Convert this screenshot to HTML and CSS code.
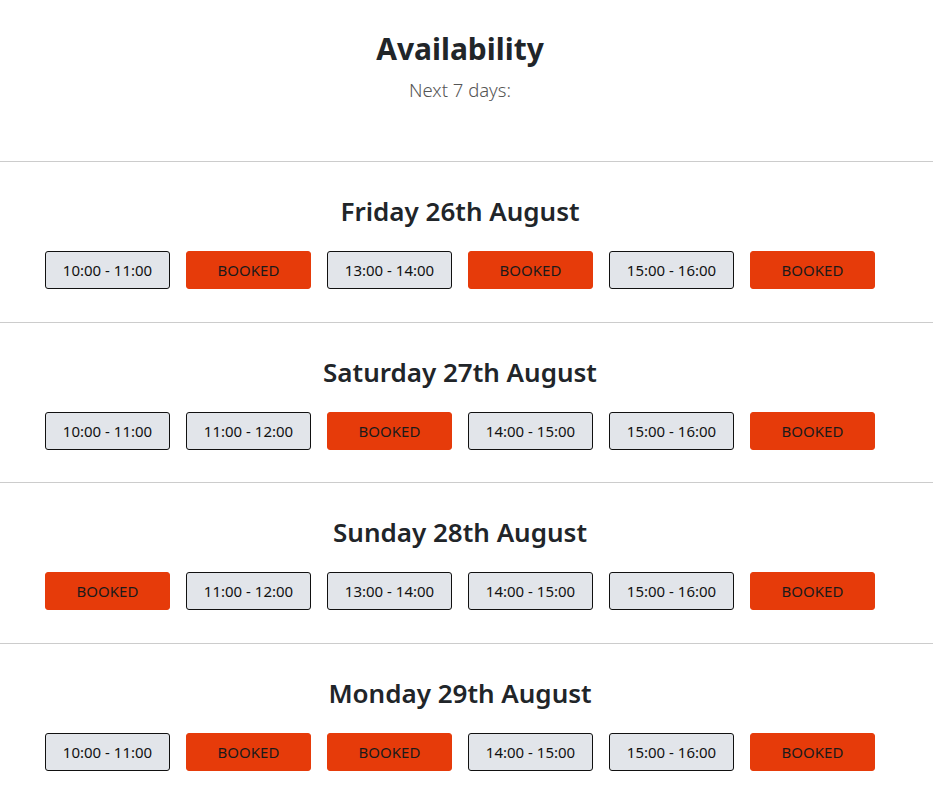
FILE: index.html
```html
<!DOCTYPE html>
<html lang="en">
<head>
<meta charset="utf-8">
<title>Availability</title>
<link rel="stylesheet" href="styles.css">
</head>
<body>
<header class="header">
  <h1 class="title">Availability</h1>
  <p class="subtitle">Next 7 days:</p>
</header>
<main>
  <section class="day">
    <h2 class="day-title">Friday 26th August</h2>
    <div class="slots">
      <button class="slot">10:00 - 11:00</button>
      <button class="slot booked">BOOKED</button>
      <button class="slot">13:00 - 14:00</button>
      <button class="slot booked">BOOKED</button>
      <button class="slot">15:00 - 16:00</button>
      <button class="slot booked">BOOKED</button>
    </div>
  </section>
  <section class="day">
    <h2 class="day-title">Saturday 27th August</h2>
    <div class="slots">
      <button class="slot">10:00 - 11:00</button>
      <button class="slot">11:00 - 12:00</button>
      <button class="slot booked">BOOKED</button>
      <button class="slot">14:00 - 15:00</button>
      <button class="slot">15:00 - 16:00</button>
      <button class="slot booked">BOOKED</button>
    </div>
  </section>
  <section class="day">
    <h2 class="day-title">Sunday 28th August</h2>
    <div class="slots">
      <button class="slot booked">BOOKED</button>
      <button class="slot">11:00 - 12:00</button>
      <button class="slot">13:00 - 14:00</button>
      <button class="slot">14:00 - 15:00</button>
      <button class="slot">15:00 - 16:00</button>
      <button class="slot booked">BOOKED</button>
    </div>
  </section>
  <section class="day">
    <h2 class="day-title">Monday 29th August</h2>
    <div class="slots">
      <button class="slot">10:00 - 11:00</button>
      <button class="slot booked">BOOKED</button>
      <button class="slot booked">BOOKED</button>
      <button class="slot">14:00 - 15:00</button>
      <button class="slot">15:00 - 16:00</button>
      <button class="slot booked">BOOKED</button>
    </div>
  </section>
</main>
</body>
</html>
```

FILE: styles.css
```css
html, body {
  margin: 0;
  padding: 0;
  background: #fff;
  color: #212529;
  font-family: "Noto Sans", "Open Sans", sans-serif;
}
body {
  overflow: hidden;
}
.header {
  width: 920px;
  text-align: center;
  padding-top: 29px;
  height: 161px;
  box-sizing: border-box;
}
.title {
  margin: 0;
  font-size: 30px;
  line-height: 40px;
  font-weight: 700;
  color: #212529;
}
.subtitle {
  margin: 9px 0 0;
  font-size: 18.5px;
  line-height: 24px;
  font-weight: 300;
  color: #555;
}
.day {
  border-top: 1px solid #ccc;
  height: 160.67px;
  box-sizing: border-box;
}
.day-title {
  width: 920px;
  margin: 0;
  padding-top: 32px;
  text-align: center;
  font-size: 26px;
  line-height: 34px;
  font-weight: 600;
  color: #212529;
}
.slots {
  width: 920px;
  display: flex;
  justify-content: center;
  gap: 16px;
  margin-top: 23px;
}
.slot {
  width: 125px;
  height: 38px;
  box-sizing: border-box;
  border: 1px solid #111;
  border-radius: 3px;
  background: #e2e5ea;
  color: #111;
  font-family: inherit;
  font-size: 15px;
  padding: 0;
}
.slot.booked {
  background: #e63b0a;
  border-color: #e63b0a;
  color: #1a1a1a;
}
```
